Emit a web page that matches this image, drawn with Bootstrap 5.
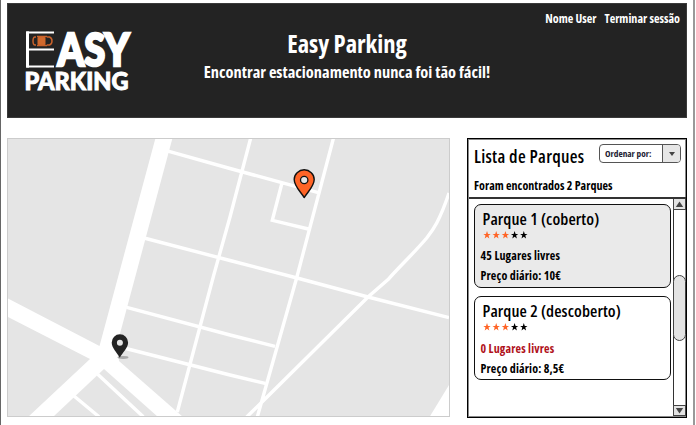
<!DOCTYPE html>
<html lang="pt">
<head>
<meta charset="utf-8">
<meta name="viewport" content="width=device-width, initial-scale=1">
<title>Easy Parking</title>
<link href="https://cdn.jsdelivr.net/npm/bootstrap@5.3.0/dist/css/bootstrap.min.css" rel="stylesheet">
<style>
body{width:696px;height:425px;overflow:hidden;background:#fff;color:#000;font-family:"Open Sans","Noto Sans",sans-serif;font-stretch:75%;font-weight:700}
.page{width:695px;height:425px;border-left:1px solid #666;border-right:2px solid #999;padding:3px 6px 0 6px}
.hero{height:115px;background:#232323;border:1px solid #3a3a3a;color:#fff;padding:0 6px 0 17px}
.logo{width:108px;height:66px;margin-top:24px;overflow:visible;flex:none}
.hero-mid{width:376px;margin-left:26px;padding-top:23px}
.line{display:block;white-space:nowrap}
.t-title{font-size:24.6px;line-height:34px}
.t-sub{font-size:16.4px;line-height:22px}
.t-user{font-size:12.1px;line-height:30px}
.main{margin-top:20px;height:280px}
.map{width:443px;height:280px}
.panel{width:220px;height:280px;border:1px solid #000;box-shadow:inset 0 0 0 1px #888;padding:0 0 1px 1px}
.phead{height:60px;border-bottom:2px solid #333;padding:5px 5px 0 5px}
.t-list{font-size:17.8px;line-height:25px;font-weight:650;letter-spacing:.3px}
.t-found{font-size:12px;line-height:18px;margin-top:8px;letter-spacing:.05px}
.sel{width:82px;height:19px;border:1px solid #555;border-radius:4px;overflow:hidden}
.sel-arrow{width:18px;border-left:1px solid #555;background:#e6e6e6}
.t-order{font-size:9.3px;line-height:17px;color:#223;padding-left:5px}
.park-list{flex:1;padding:5px 0 0 5px;gap:8px}
.park{width:197px;height:84px;border:1.5px solid #111;border-radius:7px;padding:4px 0 0 5.5px}
.free{background:#eaeaea}
.t-name{font-size:16.8px;line-height:20px;padding-left:2px;font-weight:650;letter-spacing:.1px}
.stars{width:48px;height:9px;margin:2px 0 0 2px;display:block}
.t-info{font-size:12px;line-height:20px;letter-spacing:.16px}
.park .t-info:nth-of-type(2){margin-top:6px}
.park:last-child .t-info:nth-of-type(2){margin-top:7px}
.full{color:#b0121b}
.scroll{width:13px;height:217px;flex:none}
</style>
<script src="https://cdn.jsdelivr.net/npm/bootstrap@5.3.0/dist/js/bootstrap.bundle.min.js"></script>
</head>
<body>
<svg width="0" height="0" class="position-absolute"><defs><path id="star" d="M4 0L5 2.900H7.700L5.500 4.600 6.300 7.400 4 5.700 1.700 7.400 2.500 4.600 .3 2.900H3Z"/></defs></svg>
<div class="page">
<header class="hero d-flex">
<svg class="logo" viewBox="25 28 108 66">
<path d="M54 32.500H27.500V66.500H54M27.500 49.500H54" fill="none" stroke="#fff" stroke-width="2.200"/><path d="M27.500 31.400V67.600" stroke="#fff" stroke-width="3"/>
<rect x="37.500" y="37" width="8" height="8" rx="1" fill="#d0692d"/>
<path d="M36 37H35Q33 37 33 41T35 45H36M47 37H49.500Q52 38 52 41T49.500 45H47M37 36.500H47M37 45.500H47" fill="none" stroke="#c9622b" stroke-width="1.500"/>
<g fill="#fff" stroke="#fff" font-family="Lato,sans-serif" font-weight="900">
<text x="57.500" y="66" font-size="46" stroke-width="2.600" textLength="72" lengthAdjust="spacingAndGlyphs">ASY</text>
<text x="24.500" y="90" font-size="25.500" stroke-width="1" textLength="104" lengthAdjust="spacingAndGlyphs">PARKING</text></g>
</svg>
<div class="hero-mid d-flex flex-column align-items-center"><span class="line t-title">Easy Parking</span><span class="line t-sub">Encontrar estacionamento nunca foi tão fácil!</span></div>
<div class="d-flex gap-2 ms-auto"><span class="line t-user">Nome User</span><span class="line t-user">Terminar sessão</span></div>
</header>
<main class="main d-flex justify-content-between">
<svg class="map" viewBox="7 138 443 280">
<rect x="7.500" y="138.500" width="442" height="278" fill="#e5e5e5"/>
<g fill="#fff">
<path d="M155.500 138H172.500L117.500 343 119 361 183 417H158L104 369 53 417H28L90 359 8 317V298.500L99.500 346Z"/>
<path d="M449 385V417H429.500Z"/></g>
<g fill="none" stroke="#fff" stroke-width="3.400">
<path d="M168 151.200L230 168.500 318.300 192.700M144 238L230 260.500 297 278 368 297 449 317.700M250.700 138L230 217 213.500 276 177.300 412M333.500 138L296.700 277.700 257.300 417M281.700 184L272.300 220.300 308.300 229M449 193Q443 211 436.700 223 433 230 426.700 238C414 253 400 266 388.300 279.300L368 297 260 404 246.700 417M126.700 307.300L230 335 275 346.300M120 347L230 375 265 383.300M97.700 374.300L143.300 416.700M74 396L99 416.700"/></g>
<rect x="7.500" y="138.500" width="442" height="278" fill="none" stroke="#ccc"/>
<path d="M304.200 197.500C300 191 294.200 186 294.200 179.500A10 9.700 0 0 1 314.200 179.500C314.200 186 308.500 191 304.200 197.500Z" fill="#ff6426" stroke="#111" stroke-width="1.400" stroke-linejoin="round"/>
<circle cx="304.200" cy="180" r="3.700" fill="#e5e5e5" stroke="#111" stroke-width="1.300"/>
<ellipse cx="123" cy="357.500" rx="5.500" ry="1.400" fill="#aaa"/>
<path d="M119.800 357.700C117 352.500 111.700 348 111.700 342.500A8.200 8.200 0 0 1 128.100 342.500C128.100 348 122.500 352.500 119.800 357.700Z" fill="#232323"/>
<circle cx="119.900" cy="342.700" r="3" fill="#e5e5e5"/>
</svg>
<section class="panel">
<div class="phead"><div class="d-flex justify-content-between"><span class="line t-list">Lista de Parques</span><div class="sel d-flex justify-content-between"><span class="line t-order">Ordenar por:</span><div class="sel-arrow d-flex align-items-center justify-content-center"><svg width="6" height="4"><path d="M0 0H6L3 4Z" fill="#444"/></svg></div></div></div><span class="line t-found">Foram encontrados 2 Parques</span></div>
<div class="d-flex">
<div class="park-list d-flex flex-column">
<article class="park free"><span class="line t-name">Parque 1 (coberto)</span><svg class="stars"><g fill="#ff6426"><use href="#star"/><use href="#star" x="9.200"/><use href="#star" x="18.400"/></g><use href="#star" x="27.600"/><use href="#star" x="36.800"/></svg><span class="line t-info">45 Lugares livres</span><span class="line t-info">Preço diário: 10€</span></article>
<article class="park"><span class="line t-name">Parque 2 (descoberto)</span><svg class="stars"><g fill="#ff6426"><use href="#star"/><use href="#star" x="9.200"/><use href="#star" x="18.400"/></g><use href="#star" x="27.600"/><use href="#star" x="36.800"/></svg><span class="line t-info full">0 Lugares livres</span><span class="line t-info">Preço diário: 8,5€</span></article>
</div>
<svg class="scroll" viewBox="674 199 13 217"><path d="M674.500 199V416" stroke="#333"/><rect x="674.500" y="198.500" width="12" height="11" fill="#e3e3e3" stroke="#444"/><path d="M680.500 201.500L684.200 207H676.800Z" fill="#444"/><rect x="674.500" y="275.500" width="12" height="65" rx="6" fill="#e3e3e3" stroke="#444"/><rect x="674.500" y="405.500" width="12" height="10" fill="#e3e3e3" stroke="#444"/><path d="M676.800 408H684.200L680.500 413.500Z" fill="#444"/></svg>
</div>
</section>
</main>
</div>
</body>
</html>
